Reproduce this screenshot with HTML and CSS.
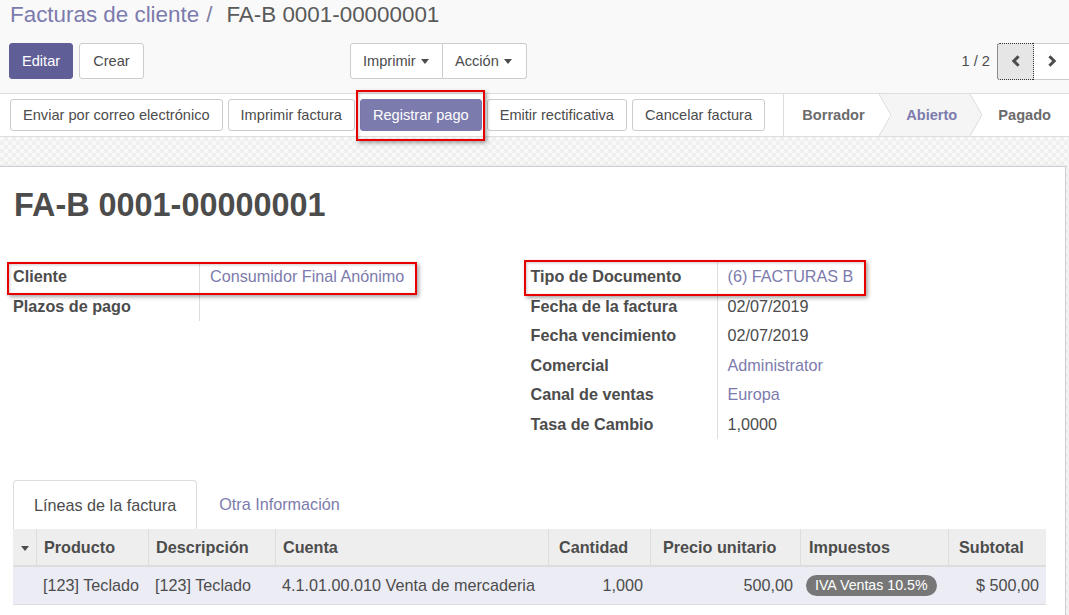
FILE: index.html
```html
<!DOCTYPE html>
<html lang="es">
<head>
<meta charset="utf-8">
<title>Facturas de cliente</title>
<link rel="stylesheet" href="styles.css">
</head>
<body>
<div class="cp">
  <div class="breadcrumb"><a class="bc-link">Facturas de cliente</a><span class="bc-sep">/</span><span class="bc-active">FA-B 0001-00000001</span></div>
  <div class="cp-row">
    <div class="cp-left">
      <div class="cp-buttons">
        <button class="btn btn-edit">Editar</button>
        <button class="btn btn-create">Crear</button>
      </div>
      <div class="btn-group">
        <button class="btn btn-first">Imprimir<span class="caret"></span></button>
        <button class="btn btn-last">Acción<span class="caret"></span></button>
      </div>
    </div>
    <div class="pager">
      <span class="pager-value">1 / 2</span>
      <div class="pager-btns">
        <button class="pbtn pbtn-focus"><svg width="10" height="12" viewBox="0 0 10 12"><path d="M7.6 1.2 L2.8 6 L7.6 10.8" fill="none" stroke="#4c4c4c" stroke-width="3"/></svg></button>
        <button class="pbtn pbtn-next"><svg width="10" height="12" viewBox="0 0 10 12"><path d="M2.4 1.2 L7.2 6 L2.4 10.8" fill="none" stroke="#4c4c4c" stroke-width="3"/></svg></button>
      </div>
    </div>
  </div>
</div>
<div class="statusbar">
  <div class="sb-buttons">
    <button class="sbtn">Enviar por correo electrónico</button>
    <button class="sbtn">Imprimir factura</button>
    <button class="sbtn sbtn-primary hl-pay">Registrar pago</button>
    <button class="sbtn">Emitir rectificativa</button>
    <button class="sbtn">Cancelar factura</button>
  </div>
  <div class="states">
    <span class="st st-first">Borrador</span>
    <svg class="chev" width="12" height="42" viewBox="0 0 12 42"><polyline points="0,0 12,21 0,42" fill="none" stroke="#dcdcdc" stroke-width="1"/></svg>
    <span class="st st-active">Abierto</span>
    <svg class="chev chev-2" width="12" height="42" viewBox="0 0 12 42"><polyline points="0,0 12,21 0,42" fill="none" stroke="#dcdcdc" stroke-width="1"/></svg>
    <span class="st st-last">Pagado</span>
  </div>
</div>
<div class="form-bg">
  <div class="sheet">
    <h1 class="title">FA-B 0001-00000001</h1>
    <div class="groups">
      <div class="group">
        <div class="frow hl hl-left"><div class="flabel">Cliente</div><div class="fval link">Consumidor Final Anónimo</div></div>
        <div class="frow"><div class="flabel">Plazos de pago</div><div class="fval"></div></div>
      </div>
      <div class="group group-right">
        <div class="frow hl hl-right"><div class="flabel">Tipo de Documento</div><div class="fval link">(6) FACTURAS B</div></div>
        <div class="frow"><div class="flabel">Fecha de la factura</div><div class="fval">02/07/2019</div></div>
        <div class="frow"><div class="flabel">Fecha vencimiento</div><div class="fval">02/07/2019</div></div>
        <div class="frow"><div class="flabel">Comercial</div><div class="fval link">Administrator</div></div>
        <div class="frow"><div class="flabel">Canal de ventas</div><div class="fval link">Europa</div></div>
        <div class="frow"><div class="flabel">Tasa de Cambio</div><div class="fval">1,0000</div></div>
      </div>
    </div>
    <div class="notebook">
      <div class="tabs">
        <span class="tab tab-active">Líneas de la factura</span>
        <span class="tab">Otra Información</span>
      </div>
      <table class="lines">
        <colgroup>
          <col class="c-toggle"><col class="c-prod"><col class="c-desc"><col class="c-acc"><col class="c-qty"><col class="c-price"><col class="c-tax"><col class="c-sub">
        </colgroup>
        <thead>
          <tr>
            <th class="th-toggle"><span class="hcaret"></span></th>
            <th class="p7">Producto</th>
            <th class="p7">Descripción</th>
            <th class="p7">Cuenta</th>
            <th class="p10">Cantidad</th>
            <th class="p12">Precio unitario</th>
            <th class="p8">Impuestos</th>
            <th class="p10">Subtotal</th>
          </tr>
        </thead>
        <tbody>
          <tr>
            <td></td>
            <td class="p7">[123] Teclado</td>
            <td class="p7">[123] Teclado</td>
            <td class="p7">4.1.01.00.010 Venta de mercaderia</td>
            <td class="num">1,000</td>
            <td class="num">500,00</td>
            <td class="p6"><span class="badge">IVA Ventas 10.5%</span></td>
            <td class="num">$ 500,00</td>
          </tr>
        </tbody>
      </table>
    </div>
  </div>
</div>
</body>
</html>
```

FILE: styles.css
```css
* { box-sizing: border-box; }
html, body { margin: 0; padding: 0; }
body {
  width: 1069px;
  height: 615px;
  overflow: hidden;
  font-family: "Liberation Sans", Arial, Helvetica, sans-serif;
  font-size: 14.6px;
  color: #4c4c4c;
  background: #ffffff;
}

/* control panel */
.cp {
  background: #f9f9f9;
  height: 94px;
  border-bottom: 1px solid #dddddd;
  padding-left: 9px;
}
.breadcrumb {
  height: 30px;
  line-height: 30px;
  font-size: 22.4px;
  padding-left: 1px;
  white-space: nowrap;
}
.bc-link { color: #7c7bad; }
.bc-sep { color: #7f7e9f; margin: 0 14px 0 7px; }
.bc-active { color: #5a5a5a; }

.cp-row {
  margin-top: 13px;
  height: 36px;
  display: flex;
  align-items: center;
}
.cp-left {
  width: 518px;
  display: flex;
  justify-content: space-between;
}
.cp-buttons { display: flex; gap: 6px; }
.btn {
  height: 36px;
  padding: 0 12px;
  border: 1px solid #cccccc;
  border-radius: 3px;
  background: #ffffff;
  font: inherit;
  color: #4c4c4c;
  display: inline-flex;
  align-items: center;
}
.btn-edit { background: #5f5e97; border-color: #5f5e97; color: #ffffff; }
.btn-create { padding: 0 13px; }
.btn-group { display: flex; }
.btn-first { border-radius: 3px 0 0 3px; padding: 0 12px; width: 93px; }
.btn-last { border-radius: 0 3px 3px 0; border-left: 0; padding: 0 12px; width: 84px; }
.caret {
  display: inline-block;
  margin-left: 5px;
  width: 0; height: 0;
  border-top: 5px solid #4c4c4c;
  border-left: 4px solid transparent;
  border-right: 4px solid transparent;
}

.pager {
  margin-left: auto;
  margin-right: -2px;
  display: flex;
  align-items: center;
}
.pager-value { margin-right: 7px; color: #4c4c4c; }
.pager-btns { display: flex; }
.pbtn {
  width: 37px;
  height: 37px;
  padding: 0;
  border: 1px solid #cccccc;
  background: #ffffff;
  display: flex;
  align-items: center;
  justify-content: center;
}
.pbtn-focus {
  background: #e6e6e6;
  border: 1px dotted #333333;
  border-radius: 3px 0 0 3px;
}
.pbtn-next { border-left: 0; }

/* status bar */
.statusbar {
  height: 43px;
  border-bottom: 1px solid #dddddd;
  background: #ffffff;
  display: flex;
  padding-left: 10px;
}
.sb-buttons {
  display: flex;
  align-items: center;
  gap: 5px;
}
.sbtn {
  height: 32px;
  padding: 0 12px;
  border: 1px solid #cccccc;
  border-radius: 3px;
  background: #ffffff;
  font: inherit;
  color: #4c4c4c;
}
.sbtn-primary {
  background: #7c7bad;
  border-color: #7c7bad;
  color: #ffffff;
}
.hl-pay { position: relative; }
.hl-pay::after {
  content: "";
  position: absolute;
  left: -5px;
  right: -4px;
  top: -10px;
  bottom: -11px;
  border: 2px solid #e60000;
  box-shadow: 2px 2px 4px rgba(0,0,0,0.35), inset 1px 1px 3px rgba(0,0,0,0.2);
  z-index: 5;
}

.states {
  margin-left: auto;
  display: flex;
  height: 42px;
  font-weight: bold;
  color: #6b6b6b;
}
.st {
  display: flex;
  align-items: center;
  white-space: nowrap;
}
.st-first {
  border-left: 1px solid #dddddd;
  padding: 0 14.5px 0 18px;
}
.chev { position: relative; z-index: 2; flex: none; }
.chev-2 { margin-left: -12px; }
.st-active {
  margin-left: -12px;
  padding: 0 25px 0 27px;
  background: #f5f5f5;
  color: #7c7bad;
  clip-path: polygon(0 0, calc(100% - 12px) 0, 100% 50%, calc(100% - 12px) 100%, 0 100%, 12px 50%);
}
.st-last { padding: 0 18px 0 16px; }

/* form */
.form-bg {
  height: 478px;
  padding: 29px 3px 0 0;
  background-color: #f4f4f4;
  background-image: conic-gradient(#efefef 25%, #f8f8f8 0 50%, #efefef 0 75%, #f8f8f8 0);
  background-size: 8px 8px;
}
.sheet {
  margin-left: -1px;
  height: 460px;
  background: #ffffff;
  border: 1px solid #cfcfd8;
  box-shadow: 0 0 3px rgba(0,0,0,0.08);
  padding: 20px 19px 0 13px;
  font-size: 16.2px;
}
.title {
  margin: 0;
  font-size: 32.4px;
  line-height: 36px;
  font-weight: bold;
  color: #4c4c4c;
  padding-left: 1px;
}
.groups {
  margin-top: 39px;
  display: flex;
}
.group { width: 50%; }
.group-right { padding-left: 1px; }
.frow {
  height: 29.5px;
  display: flex;
  align-items: stretch;
  position: relative;
}
.flabel {
  width: 187px;
  flex: none;
  display: flex;
  align-items: center;
  border-right: 1px solid #dddddd;
  font-weight: bold;
}
.fval {
  padding-left: 10px;
  display: flex;
  align-items: center;
}
.link { color: #7c7bad; }
.hl::after {
  content: "";
  position: absolute;
  border: 2px solid #e60000;
  box-shadow: 2px 2px 4px rgba(0,0,0,0.35), inset 1px 1px 3px rgba(0,0,0,0.2);
  z-index: 5;
}
.hl-left::after { left: -6px; top: 0; width: 406px; height: 29px; }
.hl-right::after { left: -7px; top: -2px; width: 338px; height: 32px; }

.notebook { margin-top: 41px; }
.tabs {
  display: flex;
  height: 49px;
}
.tab {
  display: flex;
  align-items: center;
  padding: 0 20px;
  color: #7c7bad;
  margin-left: 2px;
}
.tab-active {
  margin-left: 0;
  color: #4c4c4c;
  border: 1px solid #dddddd;
  border-bottom: 0;
  border-radius: 4px 4px 0 0;
  background: #ffffff;
}

.lines {
  width: 1033px;
  table-layout: fixed;
  border-collapse: separate;
  border-spacing: 0;
  font-size: 16.2px;
}
.c-toggle { width: 23px; }
.c-prod { width: 112px; }
.c-desc { width: 127px; }
.c-acc { width: 273px; }
.c-qty { width: 102px; }
.c-price { width: 150px; }
.c-tax { width: 148px; }
.c-sub { width: 98px; }
.lines th {
  height: 38px;
  background: #eeeeee;
  border-bottom: 2px solid #dddddd;
  border-left: 1px solid #dddddd;
  text-align: left;
  font-weight: bold;
  color: #4c4c4c;
  white-space: nowrap;
  padding-top: 0;
  padding-bottom: 0;
}
.lines th.th-toggle { border-left: 0; text-align: center; padding: 0; }
.hcaret {
  display: inline-block;
  width: 0; height: 0;
  border-top: 5px solid #4c4c4c;
  border-left: 4.5px solid transparent;
  border-right: 4.5px solid transparent;
  vertical-align: middle;
  margin-left: 1px;
}
.lines td {
  height: 38px;
  background: #ececf4;
  border-bottom: 1px solid #dddddd;
  white-space: nowrap;
  padding-top: 0;
  padding-bottom: 0;
}
.p6 { padding-left: 6px; }
.p7 { padding-left: 7px; }
.p8 { padding-left: 8px; }
.p10 { padding-left: 10px; }
.p12 { padding-left: 12px; }
.lines td.num { text-align: right; padding-right: 7px; }
.badge {
  display: inline-block;
  height: 21px;
  line-height: 21px;
  padding: 0 9px;
  border-radius: 11px;
  background: #777777;
  color: #ffffff;
  font-size: 14.2px;
  vertical-align: middle;
}
```
